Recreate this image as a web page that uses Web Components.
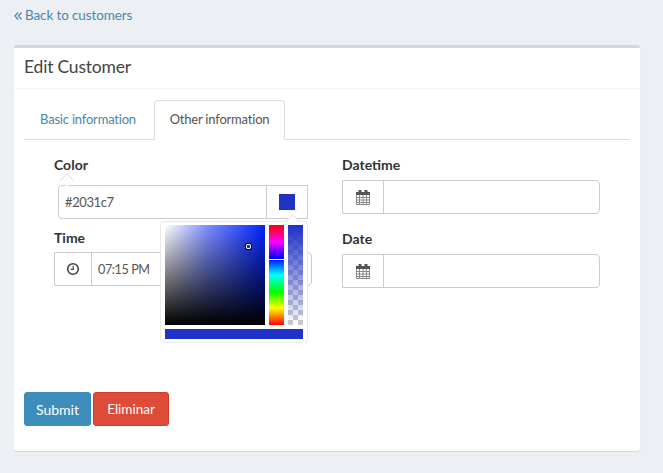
<!DOCTYPE html>
<html>
<head>
<meta charset="utf-8">
<title>Edit Customer</title>
<style>
html,body{margin:0;padding:0;}
body{
    background:#ecf0f5;
    color:#444;
    font-family:Lato,"Open Sans",sans-serif;
    font-size:14px;
    overflow:hidden;
}
</style>
</head>
<body>
<customer-page>
    <back-link slot="back">Back to customers</back-link>
    <edit-box title-text="Edit Customer">
        <tab-bar first="Basic information" second="Other information"></tab-bar>
        <div slot="form-left">
            <color-field label="Color" value="#2031c7"></color-field>
            <input-field label="Time" value="07:15 PM" icon="clock" style="margin-top:9px;--label-gap:4px;--addon-width:37px"></input-field>
        </div>
        <div slot="form-right">
            <input-field label="Datetime" icon="calendar"></input-field>
            <input-field label="Date" icon="calendar" style="margin-top:15px"></input-field>
        </div>
        <form-button slot="actions" kind="submit">Submit</form-button>
        <form-button slot="actions" kind="danger">Eliminar</form-button>
    </edit-box>
</customer-page>

<script>
const template_page = document.createElement("template");
template_page.innerHTML = `
<style>
:host{
    display:block;
    height:473px;
    padding:7px 23px 0 14px;
    box-sizing:border-box;
}
</style>
<slot name="back"></slot>
<slot></slot>
`;
class CustomerPage extends HTMLElement {
  constructor() {
    super();
    this.attachShadow({ mode: "open" });
    this.shadowRoot.appendChild(template_page.content.cloneNode(true));
  }
}
customElements.define("customer-page", CustomerPage);

const template_back = document.createElement("template");
template_back.innerHTML = `
<style>
:host{
    display:flex;
    align-items:center;
    gap:3px;
    height:16px;
    margin-bottom:22px;
    color:#4a86a8;
    font-size:13.5px;
    letter-spacing:-.12px;
}
svg{display:block;margin-top:1px;}
</style>
<svg width="8" height="10" viewBox="0 0 8 10" fill="none" stroke="currentColor" stroke-width="1.2">
    <path d="M4 1.500 1 5l3 3.500M7.500 1.500 4.500 5l3 3.500"/>
</svg>
<span><slot></slot></span>
`;
class BackLink extends HTMLElement {
  constructor() {
    super();
    this.attachShadow({ mode: "open" });
    this.shadowRoot.appendChild(template_back.content.cloneNode(true));
  }
}
customElements.define("back-link", BackLink);

const template_box = document.createElement("template");
template_box.innerHTML = `
<style>
:host{
    display:block;
    height:406px;
    box-sizing:border-box;
    background:#fff;
    border-top:3px solid #d2d6de;
    border-radius:3px;
    box-shadow:0 1px 1px rgba(0,0,0,.1);
}
header{
    height:41px;
    box-sizing:border-box;
    border-bottom:1px solid #f4f4f4;
    padding:0 10px 4px;
    display:flex;
    align-items:center;
    font-size:17.5px;
    letter-spacing:-.2px;
    color:#444;
}
.body{padding:11px 10px 0;}
.form{
    display:grid;
    grid-template-columns:258px 258px;
    column-gap:30px;
    padding:15px 0 0 30px;
    height:252px;
    box-sizing:border-box;
}
.actions{display:flex;gap:2px;}
</style>
<header id="title"></header>
<div class="body">
    <slot></slot>
    <div class="form">
        <div><slot name="form-left"></slot></div>
        <div><slot name="form-right"></slot></div>
    </div>
    <div class="actions"><slot name="actions"></slot></div>
</div>
`;
class EditBox extends HTMLElement {
  constructor() {
    super();
    this.attachShadow({ mode: "open" });
    this.shadowRoot.appendChild(template_box.content.cloneNode(true));
    this.shadowRoot.getElementById("title").textContent = this.getAttribute("title-text");
  }
}
customElements.define("edit-box", EditBox);

const template_tabs = document.createElement("template");
template_tabs.innerHTML = `
<style>
:host{
    display:flex;
    height:39px;
    border-bottom:1px solid #ddd;
    font-size:13px;
    letter-spacing:-.2px;
}
div{
    box-sizing:border-box;
    display:flex;
    align-items:center;
    justify-content:center;
    height:40px;
    padding-bottom:2px;
    border:1px solid transparent;
    border-radius:4px 4px 0 0;
}
#a{width:130px;padding-right:2px;color:#4a86a8;}
#b{width:131px;color:#555;background:#fff;border-color:#ddd;border-bottom-color:#fff;}
</style>
<div id="a"></div><div id="b"></div>
`;
class TabBar extends HTMLElement {
  constructor() {
    super();
    this.attachShadow({ mode: "open" });
    this.shadowRoot.appendChild(template_tabs.content.cloneNode(true));
    this.shadowRoot.getElementById("a").textContent = this.getAttribute("first");
    this.shadowRoot.getElementById("b").textContent = this.getAttribute("second");
  }
}
customElements.define("tab-bar", TabBar);

const icons = {
  clock: `<svg width="14" height="14" viewBox="0 0 14 14" fill="none" stroke="#444"><circle cx="7" cy="7" r="5.300" stroke-width="1.600"/><path d="M7.200 3.800V7.400H4.600" stroke-width="1.200"/></svg>`,
  calendar: `<svg width="14" height="15" viewBox="0 0 14 15"><path fill="#555" d="M0 2h14v3H0zM2.500 0h3v3h-3zM8.500 0h3v3h-3z"/><path fill="none" stroke="#888" d="M.5 5v9.500h13V5M0 7.500h14M0 10h14M0 12.500h14M3.500 5v9M7 5v9M10.500 5v9"/></svg>`
};

const template_input = document.createElement("template");
template_input.innerHTML = `
<style>
:host{display:block;font-size:14px;}
label{display:block;font-weight:700;color:#333;height:20px;line-height:20px;margin-bottom:var(--label-gap,5px);}
.group{
    display:flex;
    height:34px;
    box-sizing:border-box;
    border:1px solid #ccc;
    border-radius:0 4px 4px 0;
    background:#fff;
}
.addon{
    width:var(--addon-width,41px);
    box-sizing:border-box;
    flex:none;
    border-right:1px solid #ccc;
    display:flex;
    align-items:center;
    justify-content:center;
}
.value{padding:0 6px;display:flex;align-items:center;color:#555;font-size:12.6px;letter-spacing:-.4px;}
</style>
<label></label>
<div class="group">
    <div class="addon"></div>
    <div class="value"></div>
</div>
`;
class InputField extends HTMLElement {
  constructor() {
    super();
    this.attachShadow({ mode: "open" });
    this.shadowRoot.appendChild(template_input.content.cloneNode(true));
    this.shadowRoot.querySelector("label").textContent = this.getAttribute("label");
    this.shadowRoot.querySelector(".addon").innerHTML = icons[this.getAttribute("icon")];
    this.shadowRoot.querySelector(".value").textContent = this.getAttribute("value") || "";
  }
}
customElements.define("input-field", InputField);

const template_color = document.createElement("template");
template_color.innerHTML = `
<style>
:host{display:block;position:relative;font-size:14px;}
label{display:block;font-weight:700;color:#333;height:20px;line-height:20px;margin-bottom:10px;}
.group{
    display:flex;
    height:34px;
    margin:0 4px;
    box-sizing:border-box;
    border:1px solid #ccc;
    border-radius:4px 0 0 4px;
    background:#fff;
}
.value{flex:1;padding:0 6px;display:flex;align-items:center;color:#555;font-size:13px;letter-spacing:-.4px;}
.addon{
    width:41px;
    box-sizing:border-box;
    flex:none;
    border-left:1px solid #ccc;
    display:flex;
    align-items:center;
    justify-content:center;
}
.swatch{width:16px;height:16px;background:#2031c7;}
.stray{
    position:absolute;
    left:8px;top:20px;
    width:9px;height:9px;
    background:#fff;
    border:1px solid #e4e4e4;
    border-width:1px 0 0 1px;
    transform:rotate(45deg);
}
color-popover{position:absolute;left:106px;top:66px;}
</style>
<label></label>
<span class="stray"></span>
<div class="group">
    <div class="value"></div>
    <div class="addon"><div class="swatch"></div></div>
</div>
<color-popover></color-popover>
`;
class ColorField extends HTMLElement {
  constructor() {
    super();
    this.attachShadow({ mode: "open" });
    this.shadowRoot.appendChild(template_color.content.cloneNode(true));
    this.shadowRoot.querySelector("label").textContent = this.getAttribute("label");
    this.shadowRoot.querySelector(".value").textContent = this.getAttribute("value");
  }
}

const template_popover = document.createElement("template");
template_popover.innerHTML = `
<style>
:host{
    display:block;
    box-sizing:border-box;
    width:148px;
    height:122px;
    padding:3px 4px;
    background:#fff;
    border:1px solid #e9e9e9;
    border-radius:4px;
    z-index:5;
}
.caret{
    position:absolute;
    right:10px;top:-6px;
    width:8px;height:8px;
    background:#fff;
    border:1px solid #e4e4e4;
    border-width:1px 0 0 1px;
    transform:rotate(45deg);
}
.top{position:relative;display:flex;gap:4px;height:100px;}
.sat{
    width:100px;height:100px;position:relative;
    background:
      linear-gradient(to top,#000,rgba(0,0,0,0)),
      linear-gradient(to right,#fff,rgba(255,255,255,.5) 42%,rgba(255,255,255,0)),
      #0022ff;
}
.cursor{
    position:absolute;left:81px;top:19px;
    width:3px;height:3px;
    border:1px solid #fff;
    outline:1px solid #000;
    border-radius:1px;
}
.hue{
    width:15px;height:100px;position:relative;
    background:linear-gradient(to bottom,#f00 0%,#f0f 17%,#00f 33%,#0ff 50%,#0f0 67%,#ff0 83%,#f00 100%);
}
.hue i{position:absolute;left:0;right:0;top:34px;height:1px;background:#fff;}
.alpha{
    width:15px;height:100px;
    background:
      linear-gradient(to bottom,#2031c7,rgba(32,49,199,0)),
      conic-gradient(#ccc 25%,#fff 0 50%,#ccc 0 75%,#fff 0) 0 0/10px 10px;
}
.preview{height:10px;margin-top:4px;background:#2031c7;}
</style>
<span class="caret"></span>
<div class="top">
    <div class="sat"><span class="cursor"></span></div>
    <div class="hue"><i></i></div>
    <div class="alpha"></div>
</div>
<div class="preview"></div>
`;
class ColorPopover extends HTMLElement {
  constructor() {
    super();
    this.attachShadow({ mode: "open" });
    this.shadowRoot.appendChild(template_popover.content.cloneNode(true));
  }
}
customElements.define("color-popover", ColorPopover);
customElements.define("color-field", ColorField);

const template_button = document.createElement("template");
template_button.innerHTML = `
<style>
:host{
    display:flex;
    align-items:center;
    justify-content:center;
    height:34px;
    box-sizing:border-box;
    border:1px solid #3c8dbc;
    border-radius:3px;
    background:#3c8dbc;
    color:#fff;
    font-size:14px;
    width:67px;
}
:host([kind="danger"]){
    width:76px;
    background:#dd4b39;
    border-color:#d73925;
    font-size:13.5px;
}
</style>
<slot></slot>
`;
class FormButton extends HTMLElement {
  constructor() {
    super();
    this.attachShadow({ mode: "open" });
    this.shadowRoot.appendChild(template_button.content.cloneNode(true));
  }
}
customElements.define("form-button", FormButton);
</script>
</body>
</html>
